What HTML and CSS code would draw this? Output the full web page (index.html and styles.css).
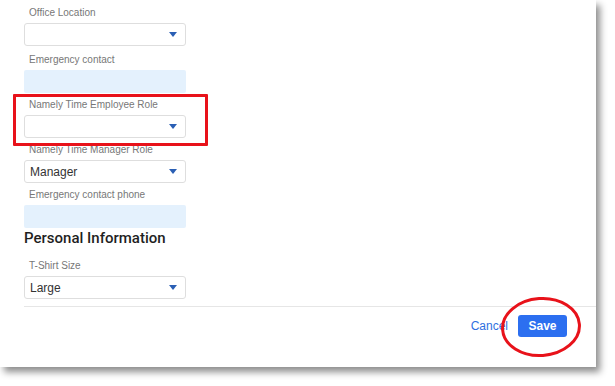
FILE: index.html
```html
<!DOCTYPE html>
<html>
<head>
<meta charset="utf-8">
<link rel="stylesheet" href="styles.css">
</head>
<body>
<div class="panel">
  <div class="form">
    <div class="field field-first">
      <div class="label">Office Location</div>
      <div class="select"><span class="value"></span><span class="caret"></span></div>
    </div>
    <div class="field">
      <div class="label">Emergency contact</div>
      <div class="input"></div>
    </div>
    <div class="field">
      <div class="label">Namely Time Employee Role</div>
      <div class="select"><span class="value"></span><span class="caret"></span></div>
    </div>
    <div class="field">
      <div class="label">Namely Time Manager Role</div>
      <div class="select"><span class="value">Manager</span><span class="caret"></span></div>
    </div>
    <div class="field">
      <div class="label">Emergency contact phone</div>
      <div class="input"></div>
    </div>
    <h2 class="section-title">Personal Information</h2>
    <div class="field">
      <div class="label">T-Shirt Size</div>
      <div class="select"><span class="value">Large</span><span class="caret"></span></div>
    </div>
  </div>
  <div class="separator"></div>
  <div class="footer">
    <a class="cancel">Cancel</a>
    <button class="save">Save</button>
  </div>

  <div class="mark-rect"></div>
  <svg class="mark-ellipse" width="84" height="64" viewBox="0 0 84 64">
    <ellipse cx="42" cy="32" rx="38.5" ry="28.5" fill="none" stroke="#e8121a" stroke-width="3" transform="rotate(-4 42 32)"/>
  </svg>
</div>
</body>
</html>
```

FILE: styles.css
```css
html, body {
  margin: 0;
  padding: 0;
  background: #ffffff;
}
body {
  font-family: "Liberation Sans", Arial, sans-serif;
  width: 615px;
  height: 386px;
  overflow: hidden;
}
.panel {
  position: relative;
  width: 596px;
  height: 367px;
  background: #ffffff;
  box-shadow: 4px 5px 7px rgba(0, 0, 0, 0.45);
}
.form {
  width: 162px;
  padding: 6px 0 0 24px;
  display: flex;
  flex-direction: column;
  gap: 5px;
}
.field {
  display: flex;
  flex-direction: column;
  gap: 3px;
}
.field-first {
  margin-bottom: 2px;
}
.label {
  font-size: 10px;
  line-height: 14px;
  height: 14px;
  color: #777777;
  padding-left: 5px;
  white-space: nowrap;
}
.select {
  box-sizing: border-box;
  height: 23px;
  border: 1px solid #dedede;
  border-radius: 3px;
  background: #fff;
  display: flex;
  align-items: center;
  justify-content: space-between;
  padding: 0 8px 0 5px;
}
.value {
  font-size: 12px;
  color: #333;
}
.caret {
  width: 0;
  height: 0;
  border-left: 4.5px solid transparent;
  border-right: 4.5px solid transparent;
  border-top: 5px solid #2a5fb4;
}
.input {
  height: 23px;
  background: #e4f1fd;
  border-radius: 2px;
}
.section-title {
  margin: -5px 0 6px 0;
  font-family: Roboto, "Liberation Sans", sans-serif;
  font-weight: 500;
  font-size: 15px;
  line-height: 20px;
  color: #1f1f1f;
  white-space: nowrap;
}
.separator {
  margin: 7px 0 0 24px;
  height: 1px;
  background: #e6e6e6;
}
.footer {
  display: flex;
  justify-content: flex-end;
  align-items: center;
  gap: 10px;
  padding: 8px 29px 0 0;
}
.cancel {
  font-size: 12px;
  color: #2f6fe0;
}
.save {
  box-sizing: border-box;
  width: 49px;
  height: 22px;
  border: none;
  border-radius: 3px;
  background: #2c6ff0;
  color: #fff;
  font-family: "Liberation Sans", Arial, sans-serif;
  font-weight: bold;
  font-size: 12px;
  padding: 0;
}
.mark-rect {
  position: absolute;
  left: 13px;
  top: 94px;
  width: 195px;
  height: 52px;
  box-sizing: border-box;
  border: 3px solid #e8121a;
  border-radius: 1px;
}
.mark-ellipse {
  position: absolute;
  left: 499px;
  top: 295px;
}
```
